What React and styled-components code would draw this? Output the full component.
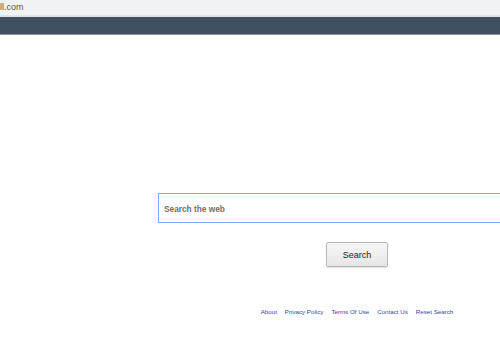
import React from "react";
import styled, { createGlobalStyle } from "styled-components";

const Global = createGlobalStyle`
  html, body { margin: 0; padding: 0; background: #fff; overflow: hidden; }
  body { font-family: Arial, "Liberation Sans", sans-serif; width: 500px; height: 350px; }
  #root { width: 500px; height: 350px; overflow: hidden; }
`;

const AddressBar = styled.div`
  height: 15px;
  background: #f1f2f4;
  border-bottom: 2px solid #e2e3e6;
  display: flex;
  align-items: center;
`;

const Url = styled.span`
  font-size: 9px;
  color: #555;
  line-height: 1;
  margin-top: -1px;
`;

const NavBar = styled.div`
  height: 17px;
  background: #3f5160;
  border-bottom: 1px solid #8a929a;
`;

const Main = styled.main`
  width: 398px;
  margin-left: 158px;
  padding-top: 158px;
  display: flex;
  flex-direction: column;
  align-items: center;
`;

const SearchInput = styled.input`
  box-sizing: border-box;
  width: 100%;
  height: 30px;
  border: 1px solid #85a8e6;
  padding: 2px 5px 0;
  font-family: Arial, "Liberation Sans", sans-serif;
  font-size: 8.3px;
  font-weight: bold;
  outline: none;
  &::placeholder { color: #707070; }
`;

const Button = styled.button`
  margin-top: 19px;
  width: 62px;
  height: 25px;
  border: 1px solid #b9b9b9;
  border-radius: 2px;
  background: linear-gradient(#f7f7f7, #e6e6e6);
  box-shadow: 0 1px 1px rgba(0,0,0,0.12);
  font-family: Arial, "Liberation Sans", sans-serif;
  font-size: 9px;
  color: #222;
  padding: 0;
`;

const Footer = styled.nav`
  margin-top: 41px;
  display: flex;
  gap: 8px;
`;

const Link = styled.a`
  font-size: 6.2px;
  color: #34489c;
  text-decoration: none;
`;

const links = ["About", "Privacy Policy", "Terms Of Use", "Contact Us", "Reset Search"];

export default function App() {
  return (
    <>
      <Global />
      <AddressBar><Url>ll.com</Url></AddressBar>
      <NavBar />
      <Main>
        <SearchInput placeholder="Search the web" />
        <Button>Search</Button>
        <Footer>
          {links.map((l) => <Link key={l} href="#">{l}</Link>)}
        </Footer>
      </Main>
    </>
  );
}
